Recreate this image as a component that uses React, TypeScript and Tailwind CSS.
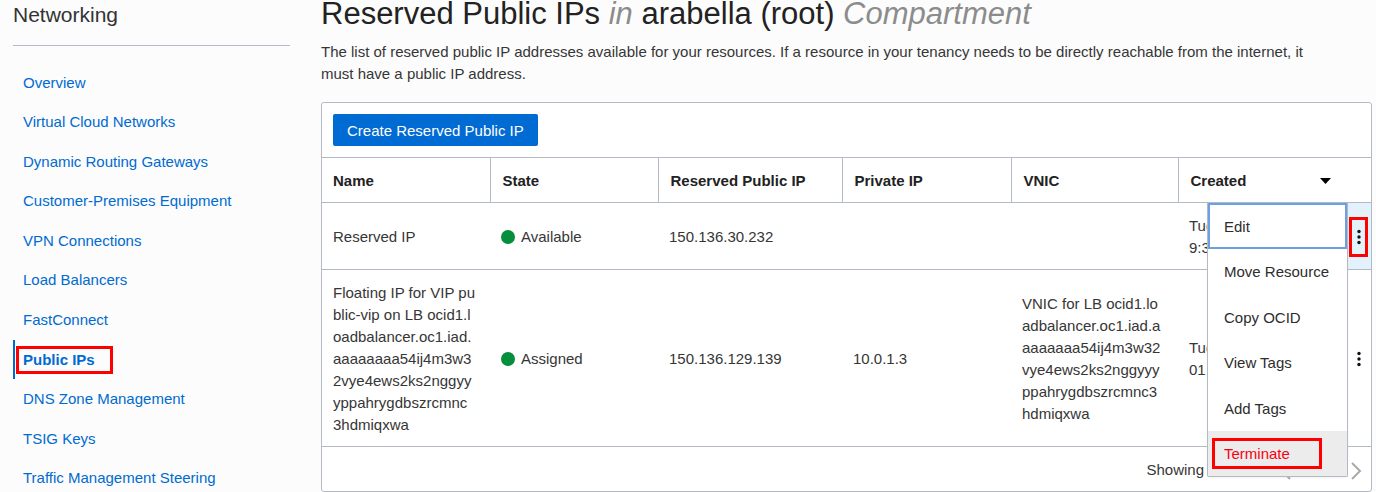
import { clsx } from "clsx";

const navItems = [
  "Overview",
  "Virtual Cloud Networks",
  "Dynamic Routing Gateways",
  "Customer-Premises Equipment",
  "VPN Connections",
  "Load Balancers",
  "FastConnect",
  "Public IPs",
  "DNS Zone Management",
  "TSIG Keys",
  "Traffic Management Steering",
];

const menuItems = ["Edit", "Move Resource", "Copy OCID", "View Tags", "Add Tags", "Terminate"];

type Row = {
  name: string[];
  state: string;
  publicIp: string;
  privateIp: string;
  vnic: string[];
  created: string[];
  menuOpen: boolean;
};

const rows: Row[] = [
  {
    name: ["Reserved IP"],
    state: "Available",
    publicIp: "150.136.30.232",
    privateIp: "",
    vnic: [],
    created: ["Tue", "9:3"],
    menuOpen: true,
  },
  {
    name: [
      "Floating IP for VIP pu",
      "blic-vip on LB ocid1.l",
      "oadbalancer.oc1.iad.",
      "aaaaaaaa54ij4m3w3",
      "2vye4ews2ks2nggyy",
      "yppahrygdbszrcmnc",
      "3hdmiqxwa",
    ],
    state: "Assigned",
    publicIp: "150.136.129.139",
    privateIp: "10.0.1.3",
    vnic: [
      "VNIC for LB ocid1.lo",
      "adbalancer.oc1.iad.a",
      "aaaaaaa54ij4m3w32",
      "vye4ews2ks2nggyyy",
      "ppahrygdbszrcmnc3",
      "hdmiqxwa",
    ],
    created: ["Tue", "01"],
    menuOpen: false,
  },
];

function Lines({ lines }: { lines: string[] }) {
  return (
    <>
      {lines.map((line) => (
        <span key={line} className="block whitespace-nowrap">
          {line}
        </span>
      ))}
    </>
  );
}

function Kebab() {
  return (
    <svg viewBox="0 0 5 16" className="h-4 w-[5px]" fill="#111" aria-hidden="true">
      <circle cx="3" cy="2.5" r="1.7" />
      <circle cx="3" cy="8" r="1.7" />
      <circle cx="3" cy="13.5" r="1.7" />
    </svg>
  );
}

function Chevron({ direction }: { direction: "left" | "right" }) {
  return (
    <svg viewBox="0 0 12 18" className="h-[18px] w-3" fill="none" stroke="#aaa" strokeWidth="2" aria-hidden="true">
      <path d={direction === "left" ? "M10 1 2 9l8 8" : "M2 1l8 8-8 8"} />
    </svg>
  );
}

function ActionsMenu() {
  return (
    <ul
      role="menu"
      className="absolute top-0 right-full z-10 grid h-[274px] w-[141px] auto-rows-fr rounded-b-xs border border-t-0 border-[#b4bac4] bg-white shadow-xs"
    >
      {menuItems.map((item) => (
        <li key={item} role="none" className={clsx("flex", item === "Terminate" && "bg-[#ececec]")}>
          <button
            type="button"
            role="menuitem"
            className={clsx(
              "relative flex-1 pt-0.5 pl-4 text-left whitespace-nowrap",
              item === "Edit" && "outline-2 outline-[#6ba0e2] -outline-offset-2",
              item === "Terminate" ? "text-[#f80012]" : "text-[#2d2d2d]",
            )}
          >
            {item}
            {item === "Terminate" && (
              <span className="absolute inset-y-[7px] right-[25px] left-1 border-3 border-[#ff0000]" />
            )}
          </button>
        </li>
      ))}
    </ul>
  );
}

export default function App() {
  return (
    <div className="flex h-screen gap-[31px] overflow-hidden bg-[#fcfcfc] pr-1 pl-[13px] font-['Liberation_Sans',Arial,sans-serif] text-[15px] leading-[22px] text-[#363636]">
      <aside className="w-[277px] shrink-0">
        <h2 className="flex h-[46px] items-start border-b border-[#b4bac8] pt-0.5 text-[21px] leading-[26px] text-[#333]">
          Networking
        </h2>
        <nav className="pt-[17px]">
          <ul className="grid h-[435px] auto-rows-fr">
            {navItems.map((item) => {
              const active = item === "Public IPs";
              return (
                <li
                  key={item}
                  className={clsx(
                    "flex items-center border-l-2 pl-2",
                    active ? "border-[#006bcf]" : "border-transparent",
                  )}
                >
                  <a
                    href="#"
                    aria-current={active ? "page" : undefined}
                    className={clsx("relative text-[#006bd0]", active && "font-bold")}
                  >
                    {item}
                    {active && (
                      <span className="absolute -inset-y-[3px] -right-[18px] -left-[7px] border-3 border-[#ff0000]" />
                    )}
                  </a>
                </li>
              );
            })}
          </ul>
        </nav>
      </aside>

      <main className="min-w-0 flex-1">
        <h1 className="h-[41px] text-[31px] leading-7 whitespace-nowrap text-[#222]">
          Reserved Public IPs <em className="text-[#8c8c8c]">in</em> arabella (root){" "}
          <em className="text-[#8c8c8c]">Compartment</em>
        </h1>
        <p className="pr-10">
          The list of reserved public IP addresses available for your resources. If a resource in your tenancy needs to
          be directly reachable from the internet, it must have a public IP address.
        </p>

        <section className="mt-[17px] rounded-[3px] border border-[#b4bac4] bg-white">
          <div className="px-[11px] py-[11px]">
            <button type="button" className="h-8 rounded-xs bg-[#006bd3] px-3.5 pt-0.5 whitespace-nowrap text-white">
              Create Reserved Public IP
            </button>
          </div>
          <table className="w-full table-fixed border-collapse">
            <colgroup>
              <col className="w-[168px]" />
              <col className="w-[168px]" />
              <col className="w-[184px]" />
              <col className="w-[169px]" />
              <col className="w-[167px]" />
              <col />
              <col className="w-[23px]" />
            </colgroup>
            <thead>
              <tr className="h-[45px] border-y border-[#b4bac4] text-left text-[#222]">
                {["Name", "State", "Reserved Public IP", "Private IP", "VNIC"].map((label) => (
                  <th
                    key={label}
                    scope="col"
                    className="border-r border-[#b4bac4] pt-0.5 pr-2 pl-3 whitespace-nowrap first:pl-[11px]"
                  >
                    {label}
                  </th>
                ))}
                <th scope="col" colSpan={2} className="pt-0.5 pr-10 pl-3" aria-sort="descending">
                  <button type="button" className="flex w-full items-center justify-between font-bold">
                    Created
                    <svg viewBox="0 0 11 6" className="h-1.5 w-[11px]" fill="#000" aria-hidden="true">
                      <path d="M0 0h11L5.5 6z" />
                    </svg>
                  </button>
                </th>
              </tr>
            </thead>
            <tbody>
              {rows.map((row) => (
                <tr key={row.publicIp} className="border-b border-[#b4bac4]">
                  <td className="px-[11px] pt-3 pb-2.5">
                    <Lines lines={row.name} />
                  </td>
                  <td className="px-[11px] pt-0.5">
                    <span className="flex items-center gap-1.5">
                      <span className="size-3.5 rounded-full bg-[#058f3c]" />
                      {row.state}
                    </span>
                  </td>
                  <td className="px-[11px] pt-0.5">{row.publicIp}</td>
                  <td className="px-[11px] pt-0.5">{row.privateIp}</td>
                  <td className="px-[11px] pt-0.5">
                    <Lines lines={row.vnic} />
                  </td>
                  <td className="px-[11px] pt-3 pb-2.5">
                    <Lines lines={row.created} />
                  </td>
                  <td className={clsx("relative pt-0.5", row.menuOpen && "bg-[#e3f1fc]")}>
                    <button
                      type="button"
                      aria-label="Actions"
                      aria-expanded={row.menuOpen}
                      className={clsx(
                        "ml-px flex h-10 w-[19px] items-center justify-center border-3",
                        row.menuOpen ? "border-[#ff0000]" : "border-transparent",
                      )}
                    >
                      <Kebab />
                    </button>
                    {row.menuOpen && <ActionsMenu />}
                  </td>
                </tr>
              ))}
            </tbody>
          </table>
          <footer className="flex h-11 items-center justify-end pt-0.5 pr-[9px]">
            <span className="mr-[76px]">Showing</span>
            <div className="flex gap-[58px] pt-0.5">
              <button type="button" aria-label="Previous page">
                <Chevron direction="left" />
              </button>
              <button type="button" aria-label="Next page">
                <Chevron direction="right" />
              </button>
            </div>
          </footer>
        </section>
      </main>
    </div>
  );
}
